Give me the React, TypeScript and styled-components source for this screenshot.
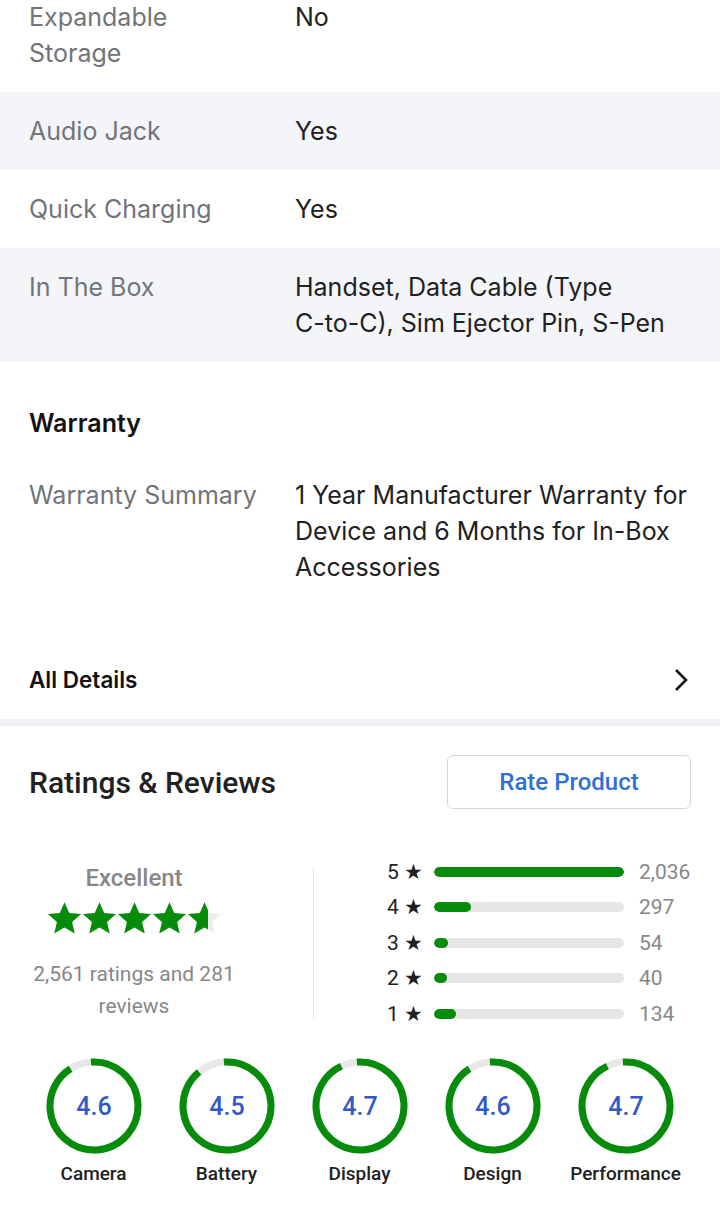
import type { ReactNode } from "react";
import styled, { createGlobalStyle } from "styled-components";

const GlobalStyle = createGlobalStyle`
  body {
    margin: 0;
    background: #fff;
    font-family: Inter, "Noto Sans", sans-serif;
  }
`;

const Page = styled.div`
  width: 720px;
  height: 1207px;
  overflow: hidden;
`;

const SpecList = styled.div`
  margin-top: -22px;
`;

const SpecRow = styled.div<{ $shade?: boolean }>`
  display: grid;
  grid-template-columns: 266px 1fr;
  padding: 21px 29px;
  background: ${(p) => (p.$shade ? "#f4f5f9" : "#fff")};
  font-size: 25px;
  line-height: 36px;
`;

const Label = styled.div`
  color: #717478;
  max-width: 234px;
`;

const Value = styled.div`
  color: #212121;
`;

const NoWrap = styled.span`
  white-space: nowrap;
`;

const Section = styled.section`
  padding-top: 43px;
`;

const SectionTitle = styled.h3`
  margin: 0 29px 15px;
  font-size: 25px;
  line-height: 36px;
  font-weight: 600;
  color: #111;
`;

const DetailsLink = styled.div`
  display: flex;
  justify-content: space-between;
  align-items: center;
  padding: 56px 32px 21px 29px;
  font-size: 22.5px;
  line-height: 36px;
  font-weight: 600;
  color: #111;
`;

const Band = styled.div`
  height: 7px;
  background: #f0f1f4;
`;

const Ratings = styled.section`
  padding: 29px 29px 0;
  font-family: Roboto, "Noto Sans", sans-serif;
`;

const RatingsHeader = styled.div`
  display: flex;
  align-items: center;
  justify-content: space-between;
`;

const RatingsTitle = styled.h2`
  margin: 0;
  font-size: 30px;
  font-weight: 500;
  color: #212121;
`;

const RateButton = styled.button`
  width: 244px;
  height: 54px;
  border: 1.5px solid #d6d6d6;
  border-radius: 6px;
  background: #fff;
  color: #2f6fd6;
  font: 500 24px Roboto, "Noto Sans", sans-serif;
`;

const Summary = styled.div`
  display: flex;
  align-items: center;
  margin-top: 45px;
`;

const Overall = styled.div`
  width: 210px;
  display: flex;
  flex-direction: column;
  align-items: center;
  text-align: center;
`;

const Verdict = styled.div`
  font-size: 24px;
  line-height: 30px;
  font-weight: 500;
  color: #878787;
`;

const Stars = styled.div`
  display: flex;
  margin: 8px 0 23px;
`;

const Count = styled.div`
  font-size: 21px;
  line-height: 32px;
  color: #878787;
`;

const Divider = styled.div`
  width: 1px;
  height: 150px;
  background: #e4e4e4;
  margin: 0 73px 0 74px;
`;

const Bars = styled.div`
  flex: 1;
`;

const BarRow = styled.div`
  display: flex;
  align-items: center;
  height: 35.5px;
`;

const BarLabel = styled.span`
  width: 47px;
  font-size: 21px;
  color: #212121;
  white-space: nowrap;
`;

const Track = styled.div`
  width: 190px;
  height: 10px;
  border-radius: 5px;
  background: #e6e6e6;
  overflow: hidden;
`;

const Fill = styled.div`
  height: 100%;
  border-radius: 5px;
  background: #078b0a;
`;

const BarCount = styled.span`
  margin-left: 15px;
  font-size: 21px;
  color: #878787;
`;

const Aspects = styled.div`
  display: grid;
  grid-template-columns: repeat(5, 133px);
  margin: 26px 0 0 -2px;
`;

const Aspect = styled.div`
  display: flex;
  flex-direction: column;
  align-items: center;
`;

const AspectName = styled.div`
  margin-top: 9px;
  font-size: 19px;
  line-height: 22px;
  font-weight: 500;
  color: #212121;
`;

const specs: { label: string; value: ReactNode }[] = [
  { label: "Expandable Storage", value: "No" },
  { label: "Audio Jack", value: "Yes" },
  { label: "Quick Charging", value: "Yes" },
  {
    label: "In The Box",
    value: (
      <>
        Handset, Data Cable (Type <NoWrap>C-to-C),</NoWrap> Sim Ejector Pin, S-Pen
      </>
    ),
  },
];

const bars = [
  { star: 5, count: "2,036", w: 190 },
  { star: 4, count: "297", w: 37 },
  { star: 3, count: "54", w: 14 },
  { star: 2, count: "40", w: 13 },
  { star: 1, count: "134", w: 22 },
];

const aspects = [
  { name: "Camera", score: 4.6 },
  { name: "Battery", score: 4.5 },
  { name: "Display", score: 4.7 },
  { name: "Design", score: 4.6 },
  { name: "Performance", score: 4.7 },
];

const STAR = "M12 2.2l2.85 6.55 7.1.62-5.38 4.7 1.6 6.95L12 17.35 5.83 21.02l1.6-6.95-5.38-4.7 7.1-.62z";

const Star = ({ part = 1, idx }: { part?: number; idx: number }) => (
  <svg width="35" height="34" viewBox="1.5 1.5 21 20.4">
    <defs>
      <linearGradient id={`sg${idx}`} x1="0" x2="1" y1="0" y2="0">
        <stop offset={part} stopColor="#078b0a" />
        <stop offset={part} stopColor="#ededed" />
      </linearGradient>
    </defs>
    <path d={STAR} fill={`url(#sg${idx})`} />
  </svg>
);

const Ring = ({ score }: { score: number }) => {
  const r = 44;
  const c = 2 * Math.PI * r;
  const len = (score / 5) * c;
  return (
    <svg width="96" height="96" viewBox="0 0 96 96">
      <circle cx="48" cy="48" r={r} fill="none" stroke="#e8e8e8" strokeWidth="7" />
      <circle
        cx="48"
        cy="48"
        r={r}
        fill="none"
        stroke="#078b0a"
        strokeWidth="7"
        strokeDasharray={`${len} ${c}`}
        transform="rotate(-94 48 48)"
      />
      <text
        x="48"
        y="57"
        textAnchor="middle"
        fontFamily="Roboto, sans-serif"
        fontSize="25"
        fontWeight="500"
        fill="#3259c8"
      >
        {score.toFixed(1)}
      </text>
    </svg>
  );
};

export default function App() {
  return (
    <Page>
      <GlobalStyle />
      <SpecList>
        {specs.map((s, i) => (
          <SpecRow key={s.label} $shade={i % 2 === 1}>
            <Label>{s.label}</Label>
            <Value>{s.value}</Value>
          </SpecRow>
        ))}
      </SpecList>

      <Section>
        <SectionTitle>Warranty</SectionTitle>
        <SpecRow>
          <Label>Warranty Summary</Label>
          <Value>1 Year Manufacturer Warranty for Device and 6 Months for In-Box Accessories</Value>
        </SpecRow>
        <DetailsLink>
          <span>All Details</span>
          <svg width="14" height="24" viewBox="0 0 14 24">
            <polyline points="2,2 12,12 2,22" fill="none" stroke="#111" strokeWidth="2.6" />
          </svg>
        </DetailsLink>
      </Section>

      <Band />

      <Ratings>
        <RatingsHeader>
          <RatingsTitle>Ratings &amp; Reviews</RatingsTitle>
          <RateButton>Rate Product</RateButton>
        </RatingsHeader>

        <Summary>
          <Overall>
            <Verdict>Excellent</Verdict>
            <Stars>
              {[1, 1, 1, 1, 0.6].map((p, i) => (
                <Star key={i} part={p} idx={i} />
              ))}
            </Stars>
            <Count>
              2,561 ratings and 281
              <br />
              reviews
            </Count>
          </Overall>
          <Divider />
          <Bars>
            {bars.map((b) => (
              <BarRow key={b.star}>
                <BarLabel>{b.star} ★</BarLabel>
                <Track>
                  <Fill style={{ width: b.w }} />
                </Track>
                <BarCount>{b.count}</BarCount>
              </BarRow>
            ))}
          </Bars>
        </Summary>

        <Aspects>
          {aspects.map((a) => (
            <Aspect key={a.name}>
              <Ring score={a.score} />
              <AspectName>{a.name}</AspectName>
            </Aspect>
          ))}
        </Aspects>
      </Ratings>
    </Page>
  );
}
